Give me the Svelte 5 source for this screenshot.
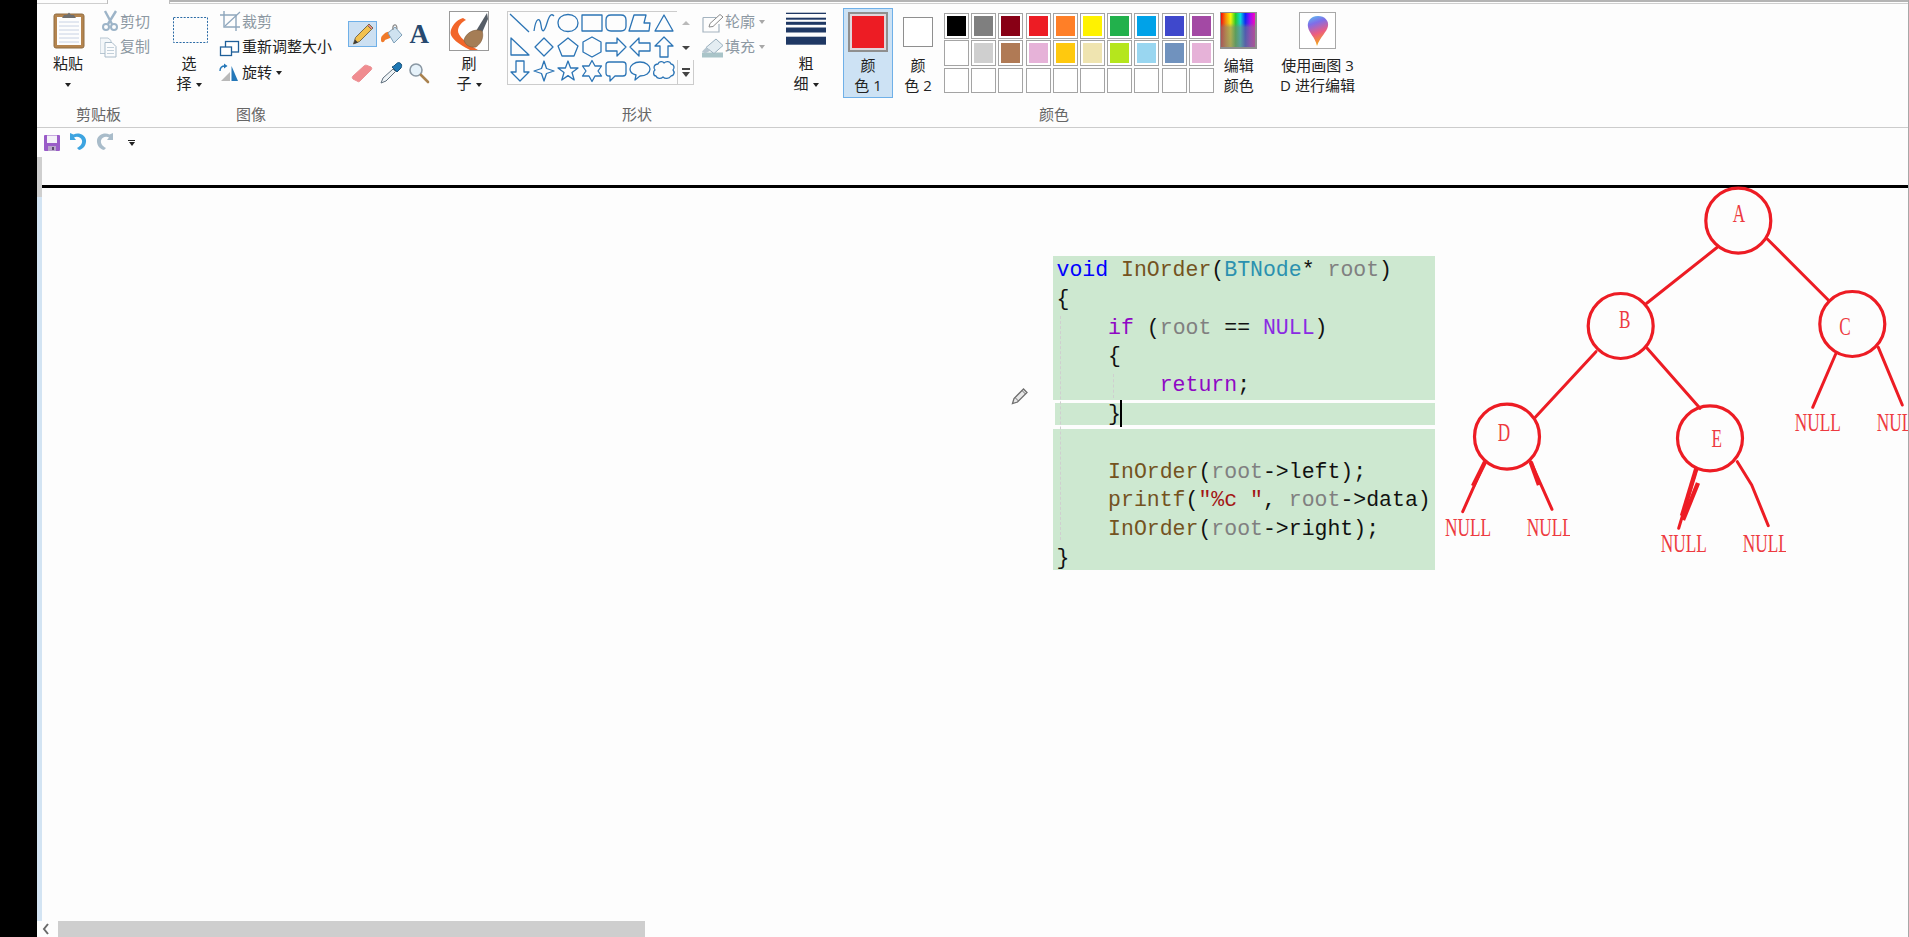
<script>
  // shapes gallery, 24px cells
  const shapes = [
    'M2 3 L21 21',
    'M2 20 C4 6 8 6 9 14 S12 22 15 12 S20 3 22 5',
    'M12 3.5 C18 3.5 22 7 22 12 C22 17 18 20.5 12 20.5 C6 20.5 2 17 2 12 C2 7 6 3.5 12 3.5 Z',
    'M2 4 H22 V20 H2 Z',
    'M7 4 H17 Q22 4 22 9 V15 Q22 20 17 20 H7 Q2 20 2 15 V9 Q2 4 7 4 Z',
    'M6 4 H18 L16 12 H22 L21 20 H1 Z',
    'M12 4 L21 20 H3 Z',
    'M3 3 V20 H21 Z',
    'M12 3 L21 12 L12 21 L3 12 Z',
    'M12 3 L22 11 L18 21 H6 L2 11 Z',
    'M12 2 L21 7 V17 L12 22 L3 17 V7 Z',
    'M2 8 H13 V3 L22 12 L13 21 V16 H2 Z',
    'M22 8 H11 V3 L2 12 L11 21 V16 H22 Z',
    'M12 2 L21 11 H16 V22 H8 V11 H3 Z',
    'M8 2 H16 V13 H21 L12 22 L3 13 H8 Z',
    'M12 2 L14.5 9.5 L22 12 L14.5 14.5 L12 22 L9.5 14.5 L2 12 L9.5 9.5 Z',
    'M12 2 L14.6 9 H22 L16 13.5 L18.2 21 L12 16.6 L5.8 21 L8 13.5 L2 9 H9.4 Z',
    'M12 1.5 L15 7 H21.5 L18 12 L21.5 17 H15 L12 22.5 L9 17 H2.5 L6 12 L2.5 7 H9 Z',
    'M5 3 H19 Q22 3 22 6 V14 Q22 17 19 17 H11 L6 22 V17 H5 Q2 17 2 14 V6 Q2 3 5 3 Z',
    'M12 3 C18 3 22 6.5 22 10 C22 14 18 17 12 17 L7 21 L8 16 C4 15 2 13 2 10 C2 6.5 6 3 12 3 Z',
    'M6 5 C7 2 11 2 12 4 C14 2 18 2 19 5 C22 5 23 9 21 11 C23 13 22 17 19 17 C17 20 13 20 11 18 C9 20 5 20 4 17 C1 17 1 12 3 11 C1 9 2 5 6 5 Z'
  ];

  const palette = [
    '#000000', '#7f7f7f', '#880015', '#ed1c24', '#ff7f27', '#fff200', '#22b14c', '#00a2e8', '#3f48cc', '#a349a4',
    '#ffffff', '#cfcfcf', '#b07a55', '#e6b2d8', '#ffc90e', '#efe4b0', '#b5e61d', '#99d6f0', '#7092be', '#e6b2d8',
    '', '', '', '', '', '', '', '', '', ''
  ];

  const code = [
    [['kw', 'void'], ['', ' '], ['fn', 'InOrder'], ['', '('], ['ty', 'BTNode'], ['', '* '], ['var', 'root'], ['', ')']],
    [['', '{']],
    [['', '    '], ['ctl', 'if'], ['', ' ('], ['var', 'root'], ['', ' == '], ['mac', 'NULL'], ['', ')']],
    [['', '    {']],
    [['', '        '], ['ctl', 'return'], ['', ';']],
    [['', '    }']],
    [['', ' ']],
    [['', '    '], ['fn', 'InOrder'], ['', '('], ['var', 'root'], ['', '->left);']],
    [['', '    '], ['fn', 'printf'], ['', '('], ['str', '"%c "'], ['', ', '], ['var', 'root'], ['', '->data)']],
    [['', '    '], ['fn', 'InOrder'], ['', '('], ['var', 'root'], ['', '->right);']],
    [['', '}']]
  ];

  // tree sketch, page coordinates
  const circles = [[1738.3, 220.7], [1620.7, 326], [1852.3, 324], [1507, 436.7], [1710, 438.3]];
  const strokes = [
    'M1717.3 247.3 L1646.7 303.3',
    'M1767.3 239 L1829 300.7',
    'M1596 351.7 L1535.3 417.3',
    'M1646.7 347.7 L1700 408.3',
    'M1530.7 461.7 L1552 509.3',
    'M1737.3 461.7 L1751.7 485 L1768.3 525.7',
    'M1835.7 354 L1812.7 407.3',
    'M1878.3 347.3 L1902.3 405',
    'M1485 461.7 L1462.7 511.7',
    'M1696.7 468.3 L1678.7 528.3'
  ];
  const heavy = ['M1485 462 L1473 486', 'M1530.7 462 L1539 485', 'M1696.5 468 L1682 516', 'M1698 483 L1683 520'];
  const letters = [['A', 1739, 222], ['B', 1624.7, 327.5], ['C', 1845, 334.5], ['D', 1504, 441], ['E', 1716.7, 446.5]];
  const nulls = [[1445, 536, 0], [1526.7, 536, 43], [1660.7, 552, 0], [1742.7, 552, 43], [1794.7, 431, 0], [1876.7, 431, 0]];
</script>

<div class="app">
  <div class="blackbar"></div>
  <div class="main">
    <div class="tabs"><div class="tab"></div></div>

    <div class="ribbon">
      <section class="group clipboard">
        <div class="body">
          <div class="big paste">
            <svg width="62" height="51" viewBox="37 4 62 51">
              <rect x="54" y="14" width="30" height="34" rx="2" fill="#b5854f" stroke="#8f6c42" />
              <rect x="57" y="17" width="24" height="28" fill="#fdfdfd" />
              <path d="M59 22 H79 M59 26 H79 M59 30 H79 M59 34 H79 M59 38 H79 M59 42 H79" stroke="#c8d2e4" />
              <path d="M62 18 L64 15 H67 L69 12.5 L71 15 H74 L76 18 Z" fill="#6f6f6f" />
            </svg>
            <span class="t">粘贴</span>
            <span class="t caret-line"><i class="caret"></i></span>
          </div>
          <div class="smalls">
            <div class="row off">
              <svg width="20" height="25" viewBox="100 9 20 25">
                <path d="M105 11 L112 24 M116 11 L108 24" stroke="#9db4c8" stroke-width="2.4" fill="none" />
                <circle cx="106" cy="27" r="3" fill="none" stroke="#9db4c8" stroke-width="2" />
                <circle cx="114" cy="27" r="3" fill="none" stroke="#9db4c8" stroke-width="2" />
              </svg>
              <span>剪切</span>
            </div>
            <div class="row off">
              <svg width="20" height="25" viewBox="100 34.5 20 25">
                <path d="M100 37.5 H108 L111 40 V53 H100 Z" fill="#f4f7f9" stroke="#b7c6d2" />
                <path d="M105 42 H112 L116 46 V56.5 H105 Z" fill="#fbfcfd" stroke="#a9bbc9" />
                <path d="M107 47 H114 M107 50 H114 M107 53 H114" stroke="#c3d0da" />
              </svg>
              <span>复制</span>
            </div>
          </div>
        </div>
        <div class="label">剪贴板</div>
      </section>

      <section class="group image">
        <div class="body">
          <div class="big select">
            <svg width="58" height="51" viewBox="160 4 58 51">
              <rect x="173.5" y="17.5" width="34" height="25" fill="none" stroke="#2a6aa5" stroke-dasharray="2 1.4" />
            </svg>
            <span class="t">选</span>
            <span class="t">择<i class="caret"></i></span>
          </div>
          <div class="smalls wide">
            <div class="row off">
              <svg width="22" height="25" viewBox="219 9 22 25">
                <path d="M224 11 V27 H240 M220 15 H236 V31" stroke="#8ea6bc" stroke-width="1.4" fill="none" />
                <path d="M225 26 L240 12" stroke="#8ea6bc" stroke-width="1.2" />
              </svg>
              <span>裁剪</span>
            </div>
            <div class="row">
              <svg width="22" height="25" viewBox="219 34.5 22 25">
                <rect x="225.5" y="41" width="13" height="10.5" fill="#fff" stroke="#1f5f99" stroke-width="1.3" />
                <rect x="220.5" y="46.5" width="11" height="8.5" fill="#fff" stroke="#1f5f99" stroke-width="1.3" />
              </svg>
              <span>重新调整大小</span>
            </div>
            <div class="row">
              <svg width="22" height="25" viewBox="219 60 22 25">
                <path d="M221 81 L230 72 V81 Z" fill="#b9b9b9" />
                <path d="M231.5 66 L238 81 H231.5 Z" fill="#2477b8" />
                <path d="M220 71 C220 67 222 66 225 66" stroke="#2477b8" stroke-width="1.4" fill="none" />
                <path d="M224 63.5 L227.5 66 L224 68.5 Z" fill="#2477b8" />
              </svg>
              <span>旋转</span><i class="caret"></i>
            </div>
          </div>
        </div>
        <div class="label">图像</div>
      </section>

      <section class="group tools">
        <div class="body toolgrid">
          <div class="tool on">
            <svg width="26" height="24" viewBox="0 0 26 24">
              <path d="M4.5 22 L6.5 15.5 L18.5 3.5 L22.5 7.5 L10.5 19.5 Z" fill="#f2c14e" stroke="#7a6a4a" />
              <path d="M18.5 3.5 L20 2 L24 6 L22.5 7.5 Z" fill="#e88a8a" stroke="#7a6a4a" />
              <path d="M4.5 22 L6 17.5 L9 20.5 Z" fill="#3a3a3a" />
            </svg>
          </div>
          <div class="tool">
            <svg width="26" height="24" viewBox="0 0 26 24">
              <path d="M4 14 C7 10 10 9 13 10 L12 16 L7 18 C6 21 3 21 3 18 C3 16 3 15 4 14 Z" fill="#f07a2a" />
              <path d="M10 11 L17 5 L24 13 L16 21 Z" fill="#cfe2f0" stroke="#7fa0b8" />
              <path d="M15 8 C14 2 19 0.5 19 7" fill="none" stroke="#8a8a8a" stroke-width="1.2" />
            </svg>
          </div>
          <div class="tool"><span class="atext">A</span></div>
          <div class="tool">
            <svg width="26" height="24" viewBox="0 0 26 24">
              <path d="M4 15 L15 5 C16 4 17 4 18 4.5 L22 6 C23 7 23 8 22 9 L11 20 C10 21 9 21 8 20 L4 18 C3 17 3 16 4 15 Z" fill="#f08c90" stroke="#eb8f93" />
            </svg>
          </div>
          <div class="tool">
            <svg width="26" height="24" viewBox="0 0 26 24">
              <path d="M3 22 L5 17 L15 8 L17.5 10.5 L8 20 Z" fill="#eef3f6" stroke="#5f6f7d" />
              <path d="M14 6 L19 11 L21 9 L23 7 C24 5 24 3 22 2 C20 1 19 2 17 4 L16 5 Z" fill="#1f78b4" stroke="#17527c" />
            </svg>
          </div>
          <div class="tool">
            <svg width="26" height="24" viewBox="0 0 26 24">
              <circle cx="10" cy="9" r="6" fill="#e6f2fa" stroke="#8a98a4" stroke-width="1.6" />
              <path d="M15 14 L22 21" stroke="#a9824f" stroke-width="2.6" stroke-linecap="round" />
            </svg>
          </div>
        </div>
      </section>

      <section class="group brush">
        <div class="big">
          <svg width="62" height="51" viewBox="438 4 62 51">
            <rect x="449.5" y="11.5" width="39" height="39" fill="#fff" stroke="#9a9a9a" />
            <path d="M476 31 L487 13 L488 19 L481 35 Z" fill="#555d66" />
            <path d="M463 18 C456 20 450.5 27 450.5 33 C451 38 458 44 470 50 L478 50 C468 44 457 36 458 30 C459 25 462 22 466 20 Z" fill="#f2662a" />
            <path d="M464 40 C466 33 474 28 482 31 C484 36 482 43 476 47 C470 48 465 45 464 40 Z" fill="#a57d55" stroke="#7d5d3d" stroke-width=".6" />
          </svg>
          <span class="t">刷</span>
          <span class="t">子<i class="caret"></i></span>
        </div>
      </section>

      <section class="group shapes">
        <div class="body shapebody">
          <div class="gallery">
            <div class="gallery-grid">
              {#each shapes as d}
                <svg width="24" height="24" viewBox="0 0 24 24"><path {d} fill="none" stroke="#2b74b5" stroke-width="1.3" stroke-linejoin="round" /></svg>
              {/each}
            </div>
          </div>
          <div class="scroller">
            <div class="arrow up"><i></i></div>
            <div class="arrow"><i></i></div>
            <div class="more"><b></b><i></i></div>
          </div>
          <div class="smalls outline">
            <div class="row off">
              <svg width="23" height="25" viewBox="700 9 23 25">
                <path d="M702 17.5 H715 M702 17.5 V32 H718 V24" stroke="#a5b4c0" stroke-width="1.2" fill="none" />
                <path d="M708 27 L709 23.5 L719 14.5 L722 17 L712 26.5 Z" fill="#fff" stroke="#8a8a8a" />
              </svg>
              <span>轮廓</span><i class="caret gray"></i>
            </div>
            <div class="row off">
              <svg width="23" height="25" viewBox="700 34.5 23 25">
                <path d="M701 57 V52 H722 V57 Z" fill="#a9c4c8" />
                <path d="M705 47 L715 38.5 L722 45 L713 53 Z" fill="#e4edf2" stroke="#9ab0be" />
                <path d="M705 47 L701 51 L704 53 L710 50 Z" fill="#b6c6d0" />
              </svg>
              <span>填充</span><i class="caret gray"></i>
            </div>
          </div>
        </div>
        <div class="label">形状</div>
      </section>

      <section class="group weight">
        <div class="big">
          <svg width="64" height="51" viewBox="774 4 64 51">
            <rect x="786" y="12.7" width="40" height="1.3" fill="#1f3864" />
            <rect x="786" y="17.7" width="40" height="2" fill="#1f3864" />
            <rect x="786" y="21.8" width="40" height="3" fill="#1f3864" />
            <rect x="786" y="27.5" width="40" height="5" fill="#1f3864" />
            <rect x="786" y="36.7" width="40" height="8" fill="#1f3864" />
          </svg>
          <span class="t">粗</span>
          <span class="t">细<i class="caret"></i></span>
        </div>
      </section>

      <section class="group colors">
        <div class="body colorbody">
          <div class="colorbtn active">
            <div class="swatchwrap"><div class="swatch one"><div></div></div></div>
            <span class="t">颜</span>
            <span class="t">色 1</span>
          </div>
          <div class="colorbtn">
            <div class="swatchwrap"><div class="swatch two"></div></div>
            <span class="t">颜</span>
            <span class="t">色 2</span>
          </div>
          <div class="palette">
            {#each palette as c}
              <div class="cell">{#if c}<div style="background:{c}"></div>{/if}</div>
            {/each}
          </div>
          <div class="big edit">
            <div class="rainbow"></div>
            <span class="t">编辑</span>
            <span class="t">颜色</span>
          </div>
        </div>
        <div class="label">颜色</div>
      </section>

      <section class="group p3d">
        <div class="big">
          <div class="p3dbox">
            <svg width="35" height="35" viewBox="1300 13 35 35">
              <defs>
                <linearGradient id="drop" x1="0" y1="0" x2="0.25" y2="1">
                  <stop offset="0" stop-color="#58c4f2" />
                  <stop offset=".3" stop-color="#7f6ee8" />
                  <stop offset=".65" stop-color="#ec5c82" />
                  <stop offset="1" stop-color="#f2a21e" />
                </linearGradient>
              </defs>
              <path d="M1318 16 C1310 16 1307 22 1308 27 C1309 33 1315 37 1317 46 C1320 37 1327 32 1328 26 C1329 21 1325 16 1318 16 Z" fill="url(#drop)" />
            </svg>
          </div>
          <span class="t">使用画图 3</span>
          <span class="t">D 进行编辑</span>
        </div>
      </section>
    </div>

    <div class="qat">
      <svg width="18" height="18" viewBox="0 0 18 18">
        <rect x="1" y="1" width="16" height="16" rx="1" fill="#9a5cc8" />
        <rect x="4" y="1.5" width="10" height="7.5" fill="#f4f1f8" />
        <rect x="5" y="12" width="8" height="5" fill="#b9a4cc" />
        <rect x="9" y="13" width="2" height="3" fill="#5a4a6a" />
      </svg>
      <svg class="undo" width="18" height="20" viewBox="0 0 18 20">
        <path d="M1 2 V9 H7 L5 6.5 C8 5 12 6 13 9.5 C13.5 12 12 15 8 17 L10 19 C15 18 17.5 13 17 9 C16 4 10 1 4.5 3.5 Z" fill="#3da4e0" />
      </svg>
      <svg class="redo" width="18" height="20" viewBox="0 0 18 20">
        <path d="M17 2 V9 H11 L13 6.5 C10 5 6 6 5 9.5 C4.5 12 6 15 10 17 L8 19 C3 18 .5 13 1 9 C2 4 8 1 13.5 3.5 Z" fill="#a9bcca" />
      </svg>
      <div class="qatcaret"><b></b><i></i></div>
    </div>

    <div class="work">
      <div class="workrow">
        <div class="strip"><div class="strip-top"></div><div class="strip-rest"></div></div>
        <div class="paper">
          <div class="code">
            <div class="gap first"></div>
            <div class="gap second"></div>
            <div class="gap edge"></div>
            <div class="guide g1"></div>
            <div class="guide g2"></div>
            <div class="lines">
              {#each code as line}
                <div class="line">{#each line as [cls, text]}<span class={cls}>{text}</span>{/each}</div>
              {/each}
            </div>
            <div class="textcaret"></div>
          </div>

          <svg class="cursor" width="18" height="18" viewBox="0 0 18 18">
            <path d="M1.5 16.5 L3 11.5 L12.5 2 L16 5.5 L6.5 15 Z" fill="#e8e8e8" stroke="#6e6e6e" stroke-width="1.3" />
            <path d="M4 10.5 L7.5 14 M11 3.5 L14.5 7" stroke="#6e6e6e" />
          </svg>

          <svg class="tree" width="468" height="385" viewBox="1440 185 468 385">
            <defs>
              <clipPath id="cut-1"><rect x="1526" y="500" width="44" height="60" /></clipPath>
              <clipPath id="cut-2"><rect x="1742" y="510" width="44" height="60" /></clipPath>
            </defs>
            {#each strokes as d}
              <path {d} fill="none" stroke="#ed1c24" stroke-width="3" stroke-linecap="round" stroke-linejoin="round" />
            {/each}
            {#each heavy as d}
              <path {d} fill="none" stroke="#ed1c24" stroke-width="4.4" />
            {/each}
            {#each circles as [cx, cy]}
              <circle {cx} {cy} r="32.5" fill="none" stroke="#ed1c24" stroke-width="3.2" />
            {/each}
            {#each letters as [ch, x, y]}
              <text class="letter" text-anchor="middle" transform="translate({x} {y}) scale(.66 1)">{ch}</text>
            {/each}
            {#each nulls as [x, y, cut], i}
              <g clip-path={cut ? `url(#cut-${i === 1 ? 1 : 2})` : undefined}>
                <text class="letter" transform="translate({x} {y}) scale(.667 1)">NULL</text>
              </g>
            {/each}
          </svg>
        </div>
      </div>
      <div class="hscroll">
        <svg width="16" height="16" viewBox="0 0 16 16"><path d="M10 3 L6 8 L10 13" fill="none" stroke="#6a6a6a" stroke-width="2" /></svg>
        <div class="thumb"></div>
      </div>
    </div>
  </div>
</div>

<style>
  :global(body) {
    margin: 0;
    background: #fdfdfd;
  }

  .app {
    display: flex;
    width: 1909px;
    height: 937px;
    overflow: hidden;
    background: #fdfdfd;
    font-family: "Open Sans", "Noto Sans CJK SC", sans-serif;
    font-size: 15px;
    line-height: 20px;
    color: #222;
  }

  .blackbar {
    width: 37px;
    background: #000;
    flex: none;
  }

  .main {
    flex: 1;
    display: flex;
    flex-direction: column;
    border-right: 1px solid #a8a8a8;
    min-width: 0;
  }

  /* top edge with the selected tab */
  .tabs {
    height: 4px;
    box-sizing: border-box;
    border-bottom: 1px solid #cfcfcf;
    position: relative;
  }

  .tabs::before {
    content: "";
    position: absolute;
    left: 133px;
    right: 0;
    top: 0;
    height: 1.5px;
    background: #b4b4b4;
  }

  .tab {
    position: absolute;
    left: 70px;
    top: 0;
    width: 63px;
    height: 4px;
    box-sizing: border-box;
    border-left: 1px solid #bdbdbd;
    border-right: 1px solid #bdbdbd;
    background: #fdfdfd;
  }

  .ribbon {
    display: flex;
    height: 124px;
    box-sizing: border-box;
    border-bottom: 1px solid #cccccc;
  }

  .group {
    display: flex;
    flex-direction: column;
    flex: none;
  }

  .body {
    display: flex;
    height: 100px;
  }

  .label {
    text-align: center;
    color: #666;
    height: 20px;
  }

  .clipboard { width: 123px; }
  .image { width: 182px; }
  .tools { width: 96px; }
  .brush { width: 62px; }
  .shapes { width: 274px; }
  .weight { width: 64px; }
  .colors { width: 432px; }
  .p3d { width: 90px; margin-left: 2.5px; }

  .big {
    display: flex;
    flex-direction: column;
    align-items: center;
  }

  .big svg {
    display: block;
  }

  .t {
    display: block;
    white-space: nowrap;
    height: 20px;
  }

  .t:first-of-type {
    margin-top: -2px;
  }

  .caret {
    display: inline-block;
    width: 0;
    height: 0;
    margin-left: 4px;
    vertical-align: middle;
    border-top: 4px solid #222;
    border-left: 3.5px solid transparent;
    border-right: 3.5px solid transparent;
  }

  .caret.gray {
    border-top-color: #a8a8a8;
  }

  .caret-line .caret {
    margin-left: 0;
  }

  .paste { width: 62px; }
  .select { width: 58px; }

  .smalls {
    padding-top: 5px;
    margin-left: 1px;
  }

  .row {
    display: flex;
    align-items: center;
    height: 25.5px;
    white-space: nowrap;
  }

  .row span {
    padding-bottom: 2px;
  }

  .row.off {
    color: #8d99a3;
  }

  .wide svg {
    margin-right: 1px;
  }

  .wide {
    margin-left: 1px;
  }

  .toolgrid {
    display: grid;
    grid-template-columns: repeat(3, 28.5px);
    grid-auto-rows: 26px;
    row-gap: 13px;
    padding: 17px 0 0 6px;
    height: 83px;
  }

  .tool {
    display: flex;
    align-items: center;
    justify-content: center;
    box-sizing: border-box;
    height: 26px;
  }

  .tool.on {
    background: #cce0f2;
    border: 1px solid #6fb0e8;
  }

  .atext {
    font-family: "Liberation Serif", serif;
    font-weight: bold;
    font-size: 27px;
    color: #27496f;
    line-height: 26px;
  }

  .shapebody {
    padding: 7px 0 0 7px;
    height: 93px;
  }

  .gallery {
    width: 170px;
    height: 74px;
    box-sizing: border-box;
    border: 1px solid #cccccc;
    border-right: none;
  }

  .gallery-grid {
    display: grid;
    grid-template-columns: repeat(7, 24px);
    grid-auto-rows: 24px;
    margin-top: -1px;
  }

  .gallery-grid svg {
    display: block;
  }

  .scroller {
    width: 17px;
    height: 74px;
    display: flex;
    flex-direction: column;
  }

  .arrow {
    height: 24.5px;
    display: flex;
    align-items: center;
    justify-content: center;
  }

  .arrow i {
    border-top: 4px solid #444;
    border-left: 4px solid transparent;
    border-right: 4px solid transparent;
  }

  .arrow.up i {
    border-top: none;
    border-bottom: 4px solid #b9b9b9;
  }

  .more {
    flex: 1;
    box-sizing: border-box;
    border: 1px solid #cccccc;
    border-top: none;
    display: flex;
    flex-direction: column;
    align-items: center;
    justify-content: center;
    gap: 2px;
  }

  .more b {
    width: 8px;
    height: 2px;
    background: #444;
  }

  .more i {
    border-top: 5px solid #444;
    border-left: 4px solid transparent;
    border-right: 4px solid transparent;
  }

  .outline {
    padding-top: 0;
    margin: -2px 0 0 7px;
  }

  .outline svg {
    margin-right: 1px;
  }

  .colorbody {
    padding: 4px 0 0 5px;
    height: 96px;
  }

  .colorbtn {
    width: 50px;
    height: 90px;
    box-sizing: border-box;
    border: 1px solid transparent;
    display: flex;
    flex-direction: column;
    align-items: center;
    flex: none;
  }

  .colorbtn.active {
    background: #cde2f4;
    border-color: #6fb0e8;
  }

  .swatchwrap {
    height: 42px;
    margin: 2px 0 4px;
    display: flex;
    align-items: center;
    justify-content: center;
  }

  .swatch.one {
    width: 40px;
    height: 40px;
    box-sizing: border-box;
    border: 2px solid #8f8f8f;
    padding: 2px;
    background: #e0d6dc;
  }

  .swatch.one div {
    width: 100%;
    height: 100%;
    background: #ed1c24;
  }

  .swatch.two {
    width: 30px;
    height: 30px;
    box-sizing: border-box;
    border: 1px solid #8f8f8f;
    background: #fff;
  }

  .palette {
    display: grid;
    grid-template-columns: repeat(10, 25px);
    grid-auto-rows: 25.5px;
    column-gap: 2.2px;
    row-gap: 1.8px;
    margin: 5px 0 0 1px;
    align-self: flex-start;
  }

  .cell {
    box-sizing: border-box;
    border: 1px solid #a4a4a4;
    padding: 2px;
    background: #fff;
  }

  .cell div {
    width: 100%;
    height: 100%;
  }

  .edit {
    width: 50px;
    margin-top: -4px;
  }

  .rainbow {
    width: 37px;
    height: 37px;
    margin: 8px 0 8px;
    box-sizing: border-box;
    border: 1px solid #8f8f8f;
    border-width: 1px 2px 2px 1px;
    background:
      linear-gradient(to bottom, rgba(128, 128, 128, 0) 0%, rgba(128, 128, 128, .15) 30%, rgba(128, 128, 128, .6) 42%, rgba(128, 128, 128, .7) 100%),
      linear-gradient(to right, #ff0000, #ff9000, #ffff00, #20d020, #00e0e0, #0020ff, #a000ff, #ff00c0);
  }

  .p3dbox {
    width: 37px;
    height: 37px;
    margin: 8px 0 8px;
    box-sizing: border-box;
    border: 1px solid #a8a8a8;
    background: #fff;
    display: flex;
    align-items: center;
    justify-content: center;
  }

  .qat {
    height: 29px;
    display: flex;
    align-items: center;
    padding-left: 6px;
    flex: none;
  }

  .undo { margin: -4px 0 0 8px; }
  .redo { margin: -4px 0 0 9px; }

  .qatcaret {
    display: flex;
    flex-direction: column;
    align-items: center;
    gap: 1px;
    margin-left: 14px;
  }

  .qatcaret b {
    width: 7px;
    height: 1px;
    background: #222;
  }

  .qatcaret i {
    border-top: 4px solid #222;
    border-left: 3px solid transparent;
    border-right: 3px solid transparent;
  }

  .work {
    flex: 1;
    display: flex;
    flex-direction: column;
    min-height: 0;
  }

  .workrow {
    height: 764px;
    display: flex;
    flex: none;
  }

  .strip {
    width: 5px;
    display: flex;
    flex-direction: column;
    flex: none;
  }

  .strip-top {
    height: 40px;
    background: #cfcfcf;
  }

  .strip-rest {
    flex: 1;
    background: #d3e4f3;
  }

  .paper {
    flex: 1;
    position: relative;
    margin-top: 28px;
    border-top: 3px solid #000;
  }

  .code {
    position: absolute;
    left: 1011px;
    top: 68px;
    width: 382px;
    height: 314px;
    background: #cde8d0;
  }

  .gap {
    position: absolute;
    background: #fdfdfd;
  }

  .gap.first { left: 0; right: 0; top: 144px; height: 3px; }
  .gap.second { left: 0; right: 0; top: 169px; height: 4px; }
  .gap.edge { left: 0; top: 147px; width: 2px; height: 22px; }

  .guide {
    position: absolute;
    width: 0;
    border-left: 1.5px dashed #cfcfcf;
  }

  .g1 { left: 7px; top: 60px; height: 224px; }
  .g2 { left: 60px; top: 118px; height: 24px; }

  .lines {
    position: relative;
    padding-left: 3.5px;
    font-family: "Liberation Mono", monospace;
    font-size: 21.5px;
    line-height: 28.8px;
    color: #111;
  }

  .line {
    height: 28.8px;
    white-space: pre;
  }

  .kw { color: #0000ff; }
  .fn { color: #74531f; }
  .ty { color: #2b91af; }
  .var { color: #808080; }
  .ctl { color: #8f08c4; }
  .mac { color: #8a2be2; }
  .str { color: #a31515; }

  .textcaret {
    position: absolute;
    left: 67px;
    top: 144px;
    width: 2px;
    height: 27px;
    background: #000;
  }

  .cursor {
    position: absolute;
    left: 969px;
    top: 199px;
  }

  .tree {
    position: absolute;
    left: 1398px;
    top: -3px;
  }

  .letter {
    font-family: "Liberation Serif", serif;
    font-size: 26px;
    fill: #ed3a40;
  }

  .hscroll {
    flex: 1;
    display: flex;
    align-items: center;
    padding-left: 1px;
  }

  .thumb {
    margin-left: 4px;
    width: 587px;
    height: 100%;
    background: #cecece;
  }
</style>
